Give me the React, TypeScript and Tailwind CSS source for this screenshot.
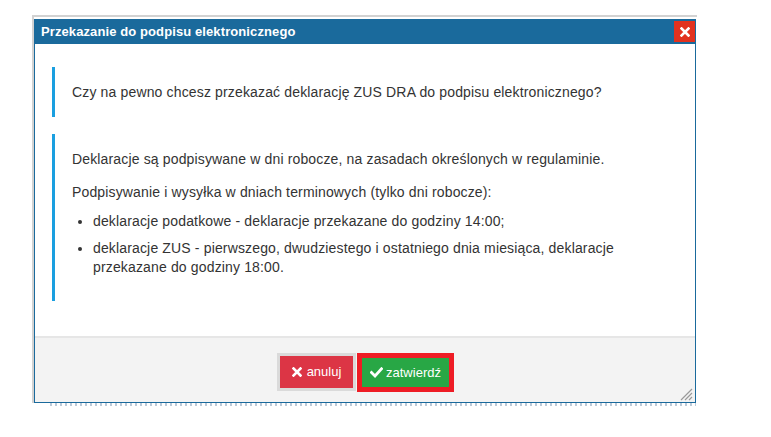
const font = "[font-family:'Liberation_Sans',Arial,sans-serif]"

function CloseIcon() {
  return (
    <svg width="10" height="10" viewBox="0 0 10 10">
      <path d="M1.5 1.5 L8.5 8.5 M8.5 1.5 L1.5 8.5" stroke="#fff" strokeWidth="2.6" strokeLinecap="square" />
    </svg>
  )
}

function CheckIcon() {
  return (
    <svg width="13" height="11" viewBox="0 0 13 11">
      <path d="M1.5 5.5 L5 9 L11.5 1.8" stroke="#fff" strokeWidth="2.8" fill="none" strokeLinecap="square" />
    </svg>
  )
}

function Grip() {
  return (
    <svg width="13" height="13" viewBox="0 0 13 13" className="absolute right-[2px] bottom-[1px]">
      <path d="M12 1 L1 12 M12 5 L5 12 M12 9 L9 12" stroke="#9a9a9a" strokeWidth="1.2" />
    </svg>
  )
}

export default function App() {
  return (
    <div className={`${font} bg-white w-[771px] h-[437px] overflow-hidden pt-[15px] pl-[32px]`}>
      <div className="w-[665px] border-l-2 border-t-2 border-[#d2d2d2] pt-[2px]">
        {/* dialog */}
        <div className="w-[662px] flex flex-col">
          <div className="h-[25px] bg-[#1a6a9c] flex items-center justify-between pl-[7px] pr-[1px]">
            <span className="text-white text-[13px] font-bold leading-none tracking-[0.1px]">
              Przekazanie do podpisu elektronicznego
            </span>
            <button className="w-[21px] h-[21px] bg-[#e2321f] flex items-center justify-center">
              <CloseIcon />
            </button>
          </div>

          <div className="bg-white border-x border-[#1a6a9c] h-[292px] px-[17px] pt-[23px] text-[14px] leading-[20px] text-[#333] tracking-[0.15px]">
            <div className="border-l-[3px] border-[#1a9fe0] pl-[17px] py-[15px]">
              <p>Czy na pewno chcesz przekazać deklarację ZUS DRA do podpisu elektronicznego?</p>
            </div>
            <div className="mt-[17px] border-l-[3px] border-[#1a9fe0] pl-[17px] pr-[15px] pt-[15px] pb-[15px]">
              <p className="mb-[13px]">Deklaracje są podpisywane w dni robocze, na zasadach określonych w regulaminie.</p>
              <p className="mb-[9px]">Podpisywanie i wysyłka w dniach terminowych (tylko dni robocze):</p>
              <ul className="list-disc pl-[21px] mb-[9px]">
                <li className="mb-[8px]">deklaracje podatkowe - deklaracje przekazane do godziny 14:00;</li>
                <li className="leading-[19px]">
                  deklaracje ZUS - pierwszego, dwudziestego i ostatniego dnia miesiąca, deklaracje przekazane do
                  godziny 18:00.
                </li>
              </ul>
            </div>
          </div>

          <div className="relative bg-[#f3f3f3] border-x border-b border-[#1a6a9c] h-[67px]">
            <div className="h-[2px] bg-[#e6e6e6]" />
            <div className="flex justify-center items-center gap-[4px] pt-[15px] pl-[4px]">
              <button className="w-[73px] h-[32px] bg-[#dc3545] ring-[3px] ring-[#dadada] flex items-center justify-center gap-[5px] text-white text-[13px] mt-[-2px]">
                <CloseIcon />
                <span>anuluj</span>
              </button>
              <div className="border-[5px] border-[#ee1c25]">
                <button className="w-[87px] h-[29px] bg-[#28a745] flex items-center justify-center gap-[3px] text-white text-[13px]">
                  <CheckIcon />
                  <span>zatwierdź</span>
                </button>
              </div>
            </div>
            <Grip />
          </div>
        </div>
      </div>
      <div className="ml-[18px] w-[646px] h-[3px] bg-[repeating-linear-gradient(90deg,#9fb3c8_0_2px,transparent_2px_5px)] opacity-70" />
    </div>
  )
}
